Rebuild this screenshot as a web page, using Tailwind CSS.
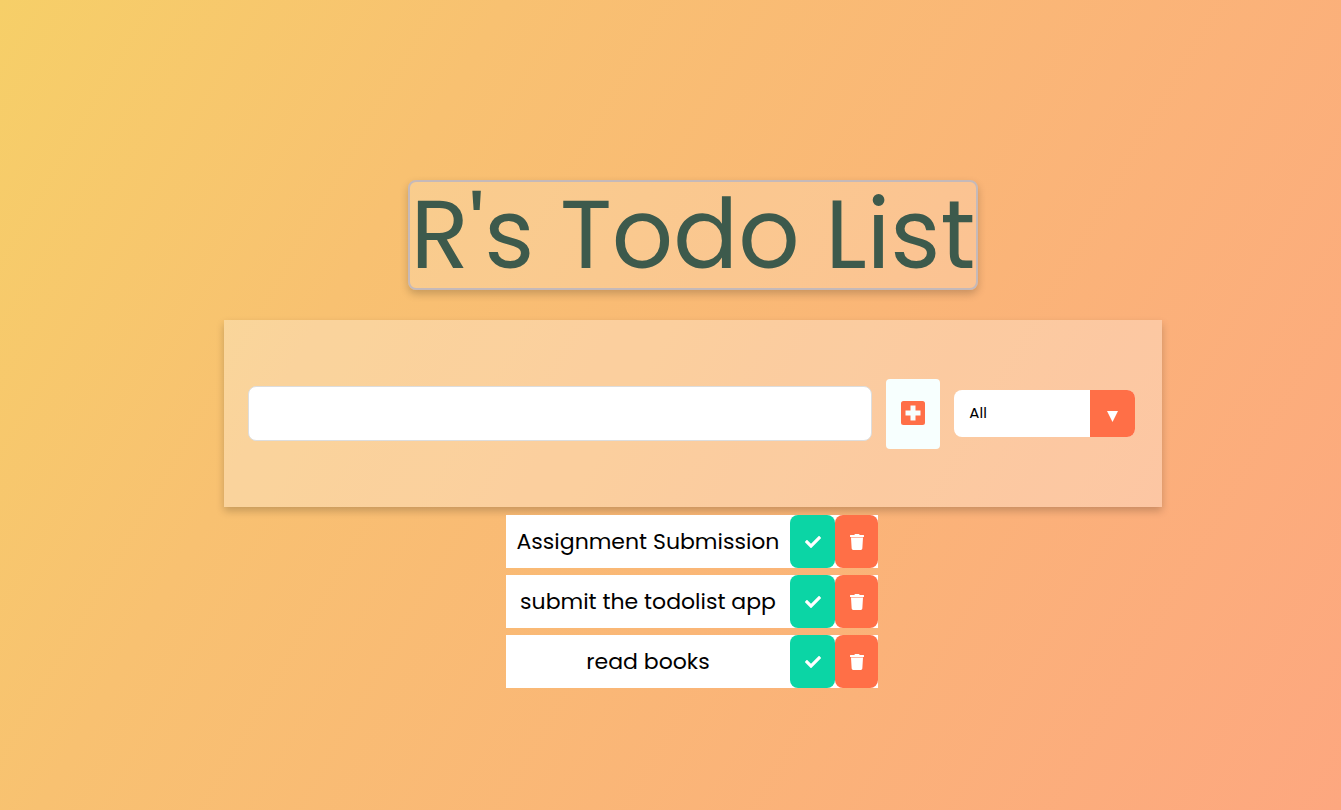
<!DOCTYPE html>
<html lang="en">
<head>
<meta charset="utf-8">
<meta name="viewport" content="width=device-width, initial-scale=1">
<title>Todo List</title>
<script src="https://cdn.jsdelivr.net/npm/@tailwindcss/browser@4"></script>
</head>
<body class="min-h-screen bg-[linear-gradient(120deg,#f6cf68_0%,#f8c171_28%,#fda77f_100%)] font-[Poppins,Inter,sans-serif] text-black">
<svg class="hidden" aria-hidden="true">
  <symbol id="check" viewBox="0 0 512 512"><path fill="currentColor" d="M173.898 439.404l-166.4-166.4c-9.997-9.997-9.997-26.206 0-36.204l36.203-36.204c9.997-9.998 26.207-9.998 36.204 0L192 312.69 432.095 72.596c9.997-9.997 26.207-9.997 36.204 0l36.203 36.204c9.997 9.997 9.997 26.206 0 36.204l-294.4 294.401c-9.998 9.997-26.207 9.997-36.204-.001z"/></symbol>
  <symbol id="trash" viewBox="0 0 448 512"><path fill="currentColor" d="M432 32H312l-9.400-18.700A24 24 0 0 0 281.100 0H166.800a23.720 23.720 0 0 0-21.400 13.300L136 32H16A16 16 0 0 0 0 48v32a16 16 0 0 0 16 16h416a16 16 0 0 0 16-16V48a16 16 0 0 0-16-16zM32 110L53.200 467a48 48 0 0 0 47.900 45h245.800a48 48 0 0 0 47.900-45L416 110z"/></symbol>
</svg>
<main class="flex flex-col items-center pt-[180px] pl-[45px]">
  <h1 class="flex h-[110px] items-center rounded-lg border-2 border-[#c5b9b9] bg-white/20 px-px text-8xl leading-none whitespace-nowrap text-[#3d5a4c] shadow-[0_4px_8px_rgba(0,0,0,0.2)]">R's Todo List</h1>
  <form class="mt-[30px] flex h-[187px] w-[70vw] items-center bg-white/30 pr-[27px] pl-6 shadow-[0_4px_8px_rgba(0,0,0,0.2)]">
    <input type="text" aria-label="New todo" class="h-[55px] min-w-0 flex-1 rounded-lg border border-[#dddddd] bg-white px-4 text-2xl outline-none">
    <button type="button" aria-label="Add todo" class="mx-[14px] flex h-[70px] w-[54px] items-center justify-center rounded bg-[#f7fffe] text-[#ff6f47]">
      <svg class="mb-[2px] size-6" viewBox="0 0 24 24"><path fill="currentColor" fill-rule="evenodd" d="M2.500 0h19A2.500 2.500 0 0 1 24 2.500v19a2.500 2.500 0 0 1-2.500 2.500h-19A2.500 2.500 0 0 1 0 21.500v-19A2.500 2.500 0 0 1 2.500 0ZM9.500 4.500v5H4.500v5h5v5h5v-5h5v-5h-5v-5Z"/></svg>
    </button>
    <div class="relative h-[47px] w-[181px] overflow-hidden rounded-lg">
      <select aria-label="Filter todos" class="h-full w-full appearance-none bg-white pr-12 pl-[15px] text-[15px] text-black outline-none">
        <option>All</option><option>Completed</option><option>Uncompleted</option>
      </select>
      <span class="pointer-events-none absolute inset-y-0 right-0 flex w-[45px] items-center justify-center bg-[#ff6f47] text-white" aria-hidden="true">
        <svg class="mt-[5px] h-[11px] w-[11px]" viewBox="0 0 11 11"><path fill="currentColor" d="M0 0h11L5.500 11z"/></svg>
      </span>
    </div>
  </form>
  <ul class="mt-2 mr-[2px] flex flex-col gap-[7px] text-[22px]">
    <li class="flex h-[53px] bg-white">
      <span class="flex w-[284px] items-center justify-center whitespace-nowrap">Assignment Submission</span>
      <button type="button" aria-label="Complete" class="flex w-[45px] items-center justify-center rounded-lg bg-[#0bd5a5] text-white"><svg class="size-4"><use href="#check"/></svg></button>
      <button type="button" aria-label="Delete" class="flex w-[43px] items-center justify-center rounded-lg bg-[#ff6f47] text-white"><svg class="h-4 w-[14px]"><use href="#trash"/></svg></button>
    </li>
    <li class="flex h-[53px] bg-white">
      <span class="flex w-[284px] items-center justify-center whitespace-nowrap">submit the todolist app</span>
      <button type="button" aria-label="Complete" class="flex w-[45px] items-center justify-center rounded-lg bg-[#0bd5a5] text-white"><svg class="size-4"><use href="#check"/></svg></button>
      <button type="button" aria-label="Delete" class="flex w-[43px] items-center justify-center rounded-lg bg-[#ff6f47] text-white"><svg class="h-4 w-[14px]"><use href="#trash"/></svg></button>
    </li>
    <li class="flex h-[53px] bg-white">
      <span class="flex w-[284px] items-center justify-center whitespace-nowrap">read books</span>
      <button type="button" aria-label="Complete" class="flex w-[45px] items-center justify-center rounded-lg bg-[#0bd5a5] text-white"><svg class="size-4"><use href="#check"/></svg></button>
      <button type="button" aria-label="Delete" class="flex w-[43px] items-center justify-center rounded-lg bg-[#ff6f47] text-white"><svg class="h-4 w-[14px]"><use href="#trash"/></svg></button>
    </li>
  </ul>
</main>
</body>
</html>
